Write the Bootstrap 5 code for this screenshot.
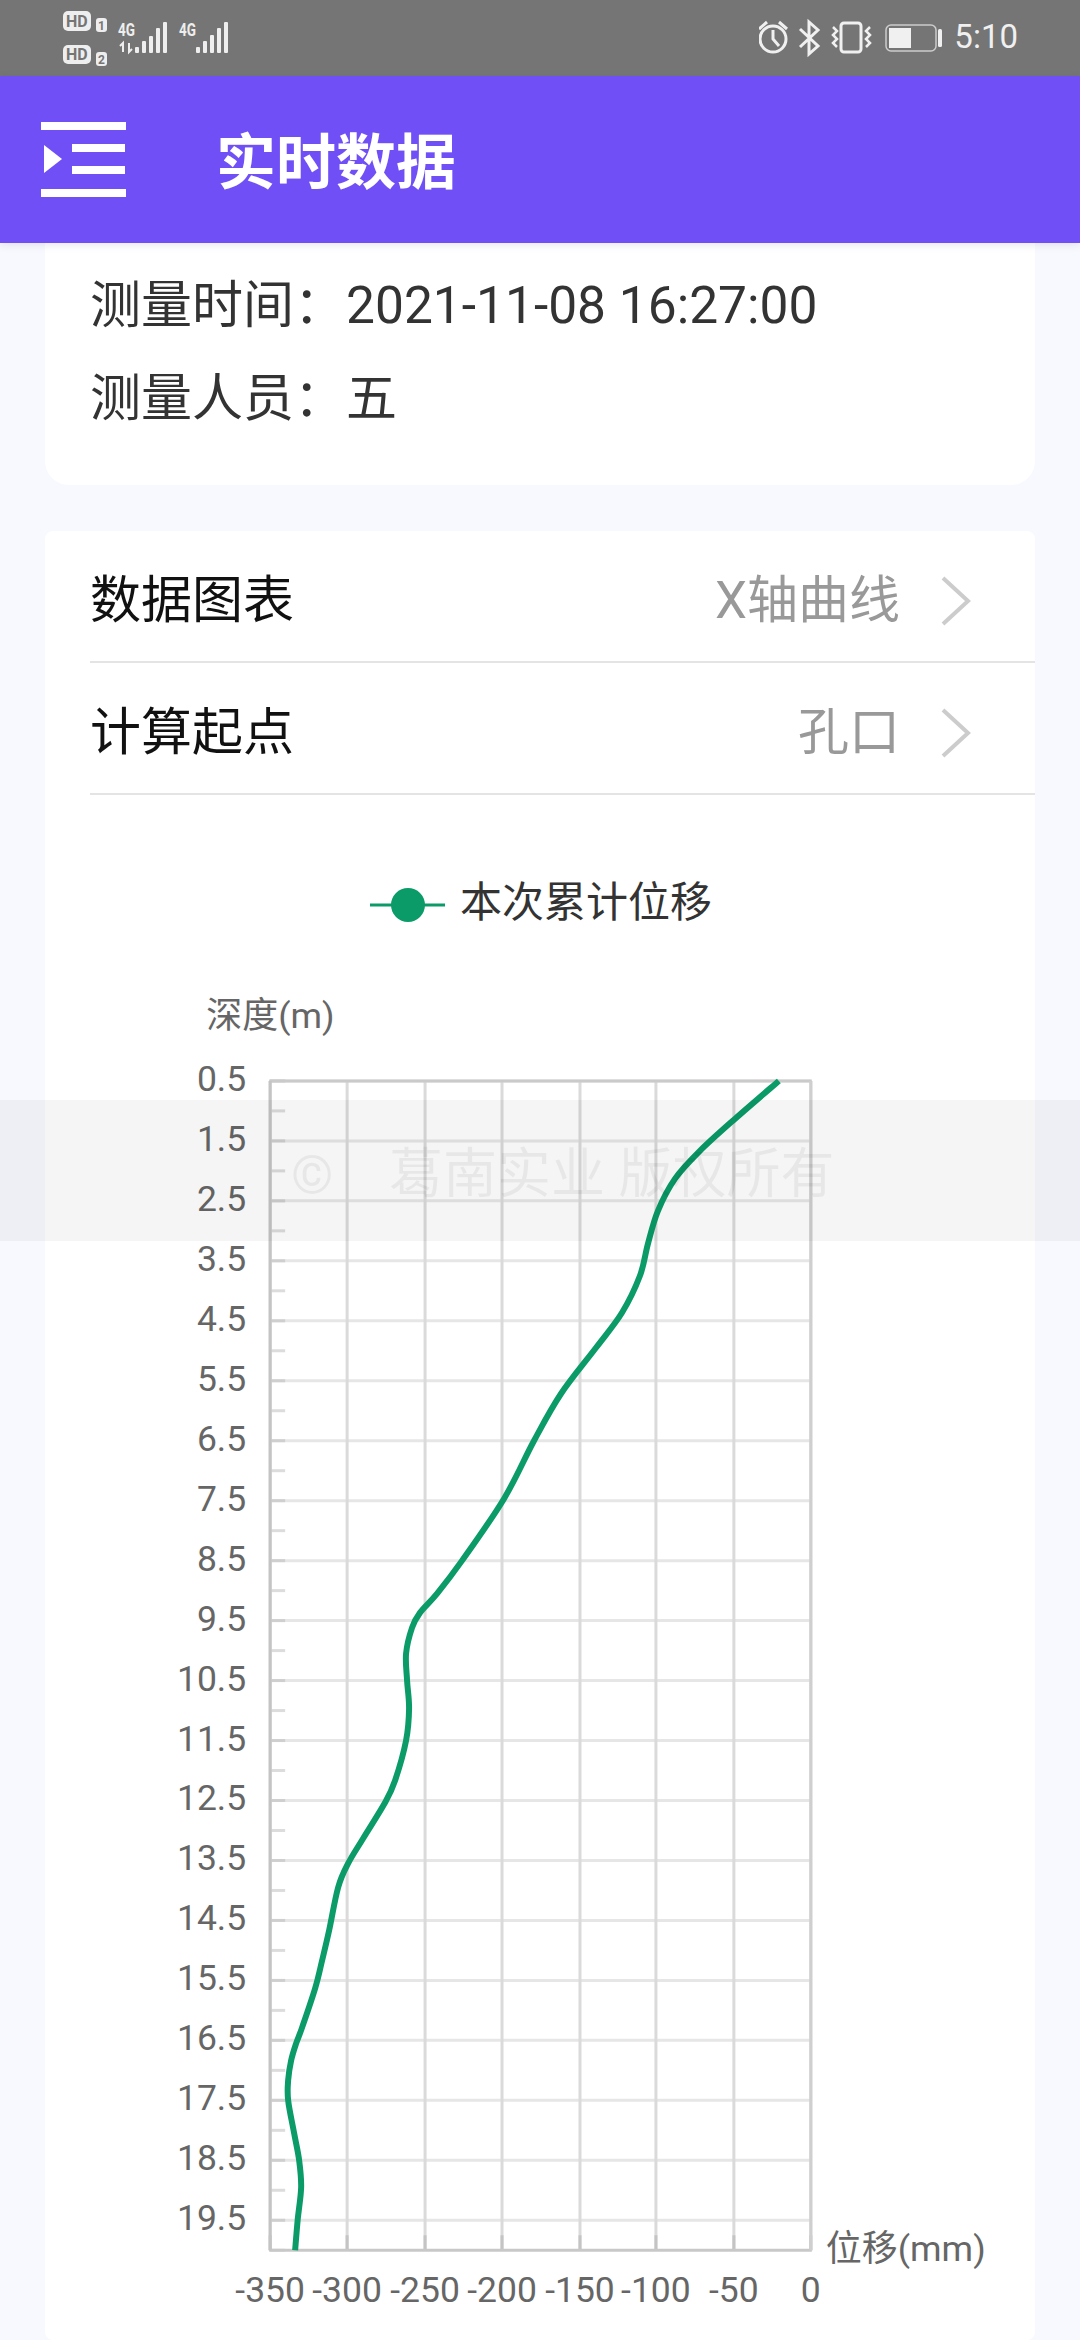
<!DOCTYPE html>
<html lang="zh-CN">
<head>
    <meta charset="UTF-8">
    <meta name="viewport" content="width=device-width, initial-scale=1.0">
    <title>实时数据</title>
    <link href="https://cdn.jsdelivr.net/npm/bootstrap@5.3.0/dist/css/bootstrap.min.css" rel="stylesheet">
    <style>
        body {
            width: 1080px;
            height: 2340px;
            overflow: hidden;
            position: relative;
            background-color: #f8f9fe;
            font-family: Roboto, "Noto Sans CJK SC", sans-serif;
        }
        .status-strip {
            height: 76px;
            background-color: #757575;
        }
        .status-strip svg { display: block; }
        .status-strip text { font-family: Roboto, sans-serif; }
        .status-time {
            color: #f0f0f0;
            font-size: 33px;
            line-height: 74px;
            margin-right: 62px;
        }
        .title-bar {
            height: 167px;
            background-color: #7050f6;
            padding: 0 0 0 41px;
            position: relative;
            z-index: 2;
            box-shadow: 0 2px 8px rgba(60, 50, 120, .12);
        }
        .title-text {
            color: #fff;
            font-size: 60px;
            font-weight: 700;
            margin-left: 90px;
            padding-top: 8px;
        }
        .sheet {
            padding: 0 45px;
        }
        .info-card {
            border: 0;
            border-radius: 0 0 24px 24px;
            padding: 16px 45px 40px;
            margin-bottom: 46px;
        }
        .info-line {
            font-size: 51px;
            line-height: 93px;
            color: #333;
            white-space: nowrap;
        }
        .info-line b {
            font-weight: 400;
            display: inline-block;
            width: 256px;
        }
        .info-value { font-size: 51.5px; }
        .data-card {
            border: 0;
            border-radius: 8px;
            height: 1809px;
        }
        .pick-row {
            height: 132px;
            margin-left: 45px;
            padding-right: 64px;
            padding-top: 11px;
            border-bottom: 2px solid #e4e4e4;
            font-size: 51px;
            color: #111;
        }
        .pick-value {
            color: #999;
            margin-right: 41px;
        }
        .legend-row {
            padding-top: 80px;
            height: 166px;
            font-size: 42px;
            color: #333;
            line-height: 60px;
            margin-left: 325px;
        }
        .legend-row span {
            margin-left: 15px;
            margin-top: -2px;
        }
        .chart-box { display: block; }
        .chart-box text {
            font-family: Roboto, "Noto Sans CJK SC", sans-serif;
            font-size: 35.5px;
            fill: #666;
        }
        .chart-box .axis-name { font-size: 36px; }
        .copy-band {
            position: absolute;
            left: 0;
            top: 1100px;
            width: 1080px;
            height: 141px;
            background-color: rgba(0, 0, 0, .04);
            color: rgba(0, 0, 0, .055);
            font-size: 54px;
            padding-left: 291px;
            padding-top: 8px;
            white-space: nowrap;
        }
        .copy-band i {
            font-style: normal;
            width: 98px;
            display: inline-block;
        }
    </style>
</head>
<body>
    <!-- 状态栏 -->
    <div class="status-strip d-flex justify-content-between">
        <svg width="240" height="76" viewBox="0 0 240 76">
            <rect x="63" y="11" width="28" height="20" rx="5" fill="#eee"/>
            <text x="66" y="27" font-size="16" font-weight="700" fill="#757575">HD</text>
            <rect x="96" y="18" width="11" height="14" rx="3" fill="#eee"/>
            <text x="98" y="30" font-size="12" font-weight="700" fill="#757575">1</text>
            <rect x="63" y="45" width="28" height="19" rx="5" fill="#eee"/>
            <text x="66" y="60" font-size="16" font-weight="700" fill="#757575">HD</text>
            <rect x="96" y="52" width="11" height="14" rx="3" fill="#eee"/>
            <text x="98" y="64" font-size="12" font-weight="700" fill="#757575">2</text>
            <text x="118" y="36" font-size="18" font-weight="700" fill="#eee" textLength="17" lengthAdjust="spacingAndGlyphs">4G</text>
            <path d="M123 52v-9l-3 3M129 43v9l3-3" fill="none" stroke="#eee" stroke-width="2"/>
            <g fill="#eee">
                <rect x="135" y="47" width="4" height="6" rx="1"/>
                <rect x="142" y="41" width="4" height="12" rx="1"/>
                <rect x="149" y="36" width="4" height="17" rx="1"/>
                <rect x="156" y="28" width="4" height="25" rx="1"/>
                <rect x="163" y="22" width="4" height="31" rx="1"/>
            </g>
            <text x="179" y="36" font-size="18" font-weight="700" fill="#eee" textLength="17" lengthAdjust="spacingAndGlyphs">4G</text>
            <g fill="#eee">
                <rect x="196" y="47" width="4" height="6" rx="1"/>
                <rect x="203" y="41" width="4" height="12" rx="1"/>
                <rect x="210" y="35" width="4" height="18" rx="1"/>
                <rect x="217" y="28" width="4" height="25" rx="1"/>
                <rect x="224" y="22" width="4" height="31" rx="1"/>
            </g>
        </svg>
        <div class="d-flex">
            <svg width="195" height="76" viewBox="760 0 195 76" fill="none" stroke="#f0f0f0">
                <circle cx="774" cy="39" r="13" stroke-width="3"/>
                <path d="M774 30v9l6 7M760 29l8-7M788 29l-8-7" stroke-width="3"/>
                <path d="M801 29l18 17-9 8V22l9 8-18 17" stroke-width="3"/>
                <rect x="842" y="23" width="20" height="29" rx="3" stroke-width="3"/>
                <path d="M834 27l4 4-4 4 4 4-4 4 4 4M871 27l-4 4 4 4-4 4 4 4-4 4" stroke-width="2.5"/>
                <rect x="887" y="25" width="50" height="26" rx="5" stroke-width="1.5" stroke="#ccc"/>
                <rect x="890" y="28" width="22" height="20" fill="#f0f0f0" stroke="none"/>
                <rect x="939" y="29" width="4" height="18" rx="1.5" fill="#f0f0f0" stroke="none"/>
            </svg>
            <div class="status-time">5:10</div>
        </div>
    </div>

    <!-- 标题栏 -->
    <div class="title-bar d-flex align-items-center">
        <svg width="85" height="76" viewBox="41 122 85 76" fill="#fff">
            <rect x="41" y="122" width="85" height="8"/>
            <rect x="72" y="144" width="53" height="8"/>
            <rect x="72" y="166" width="53" height="8"/>
            <rect x="41" y="189" width="85" height="8"/>
            <path d="M44 145l18 14-18 14z"/>
        </svg>
        <div class="title-text">实时数据</div>
    </div>

    <div class="sheet">
        <div class="card info-card">
            <div class="info-line"><b>测量时间：</b><span class="info-value">2021-11-08 16:27:00</span></div>
            <div class="info-line"><b>测量人员：</b>五</div>
        </div>

        <div class="card data-card">
            <div class="pick-row d-flex align-items-center justify-content-between">
                <div>数据图表</div>
                <div class="d-flex align-items-center">
                    <span class="pick-value">X轴曲线</span>
                    <svg width="30" height="50" viewBox="0 0 30 50" fill="none" stroke="#ccc" stroke-width="4"><path d="M2 2l25 23L2 48"/></svg>
                </div>
            </div>
            <div class="pick-row d-flex align-items-center justify-content-between">
                <div>计算起点</div>
                <div class="d-flex align-items-center">
                    <span class="pick-value">孔口</span>
                    <svg width="30" height="50" viewBox="0 0 30 50" fill="none" stroke="#ccc" stroke-width="4"><path d="M2 2l25 23L2 48"/></svg>
                </div>
            </div>
            <div class="legend-row d-flex align-items-start">
                <svg width="75" height="60" viewBox="0 0 75 60"><path d="M0 30h75" stroke="#0a9b68" stroke-width="3"/><circle cx="38" cy="30" r="17" fill="#0a9b68"/></svg>
                <span>本次累计位移</span>
            </div>
            <svg id="chart" class="chart-box" width="990" height="1380" viewBox="45 960 990 1380"></svg>
        </div>
    </div>

    <!-- 水印 -->
    <div class="copy-band d-flex align-items-center"><i>©</i>葛南实业 版权所有</div>

    <script src="https://cdn.jsdelivr.net/npm/bootstrap@5.3.0/dist/js/bootstrap.bundle.min.js"></script>
    <script>
        // 曲线坐标，直接量的屏幕像素
        const points = [[779,1080],[735,1118],[700,1150],[675,1178],[658,1210],[648,1243],[640,1275],[622,1312],[596,1347],[561,1393],[534,1440],[504,1498],[462,1560],[437,1593],[420,1612],[412,1627],[406,1653],[407,1680],[409,1708],[406,1740],[395,1780],[385,1802],[363,1838],[348,1863],[338,1887],[329,1930],[322,1960],[315,1988],[302,2027],[296,2043],[291,2060],[288,2080],[288,2100],[294,2133],[299,2160],[301,2187],[297.5,2220],[295,2250]];
        const gridX = [270, 347, 425, 502, 580, 656, 734, 811];
        const labelX = ['-350', '-300', '-250', '-200', '-150', '-100', '-50', '0'];
        const top0 = 1080, bottom0 = 2250, left0 = 270, right0 = 811;

        function line(x1, y1, x2, y2, color, width) {
            return `<line x1="${x1}" y1="${y1}" x2="${x2}" y2="${y2}" stroke="${color}" stroke-width="${width}"/>`;
        }

        // Catmull-Rom 转贝塞尔
        function smoothPath(p) {
            let d = `M${p[0][0]} ${p[0][1]}`;
            for (let i = 0; i < p.length - 1; i++) {
                const a = p[Math.max(i - 1, 0)], b = p[i], c = p[i + 1], e = p[Math.min(i + 2, p.length - 1)];
                const c1x = b[0] + (c[0] - a[0]) / 6, c1y = b[1] + (c[1] - a[1]) / 6;
                const c2x = c[0] - (e[0] - b[0]) / 6, c2y = c[1] - (e[1] - b[1]) / 6;
                d += `C${c1x} ${c1y} ${c2x} ${c2y} ${c[0]} ${c[1]}`;
            }
            return d;
        }

        let html = '';
        for (let i = 0; i < 20; i++) {
            const y = top0 + i * 60;
            html += line(left0, y, right0, y, '#e6e6e6', 3);
            html += line(left0, y, left0 + 15, y, '#cfcfcf', 3);
            html += line(left0, y + 30, left0 + 15, y + 30, '#dcdcdc', 3);
            html += `<text x="246" y="${y + 10}" text-anchor="end">${(i + 0.5).toFixed(1)}</text>`;
        }
        gridX.forEach((x, i) => {
            html += line(x, top0, x, bottom0, '#dadada', 3);
            html += line(x, bottom0 - 15, x, bottom0, '#c4c4c4', 3);
            html += `<text x="${x}" y="2302" text-anchor="middle">${labelX[i]}</text>`;
        });
        html += line(left0 - 1, top0, right0 + 1, top0, '#cacaca', 3);
        html += line(left0 - 1, bottom0, right0 + 1, bottom0, '#c8c8c8', 3);
        html += line(left0, top0, left0, bottom0, '#c4c4c4', 3);
        html += line(right0, top0, right0, bottom0, '#cfcfcf', 3);
        html += `<path d="${smoothPath(points)}" fill="none" stroke="#0a9b68" stroke-width="6"/>`;
        html += '<text class="axis-name" x="206" y="1027">深度(m)</text>';
        html += '<text class="axis-name" x="826" y="2261">位移(mm)</text>';
        document.getElementById('chart').innerHTML = html;
    </script>
</body>
</html>
